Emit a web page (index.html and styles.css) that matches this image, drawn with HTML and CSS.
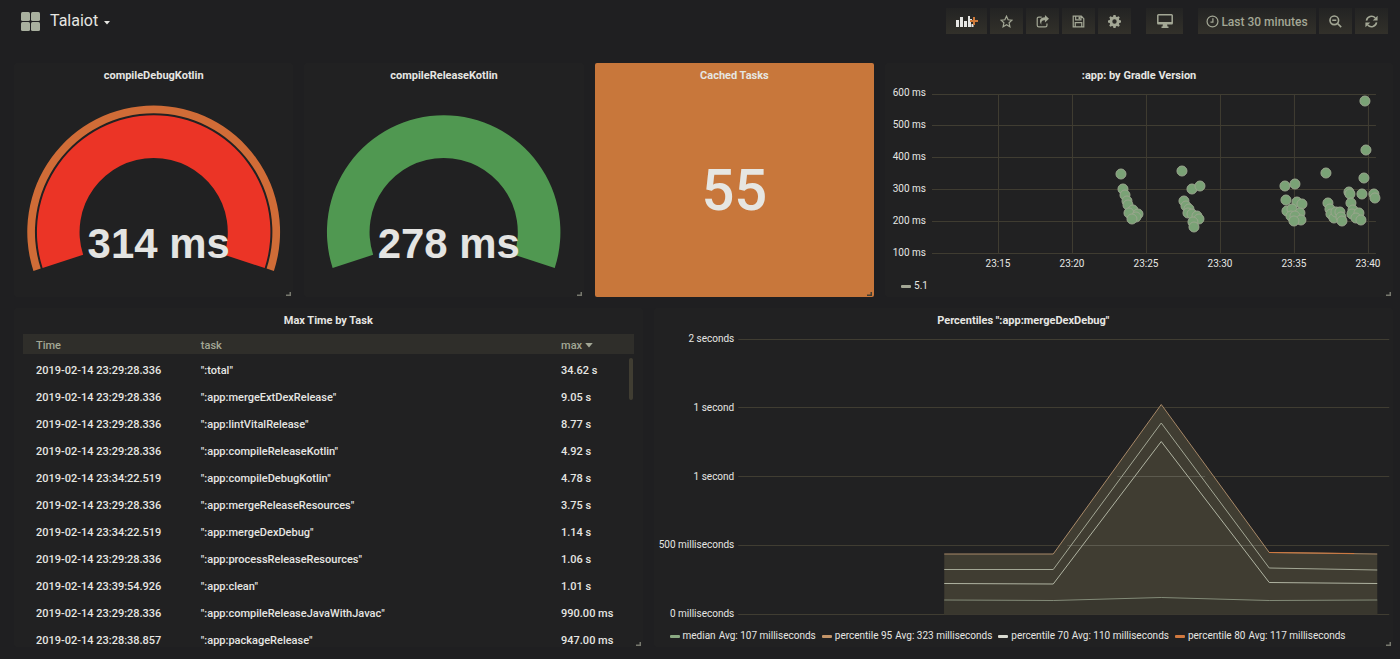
FILE: index.html
```html
<!DOCTYPE html>
<html lang="en">
<head>
<meta charset="utf-8">
<title>Talaiot</title>
<meta name="viewport" content="width=device-width, initial-scale=1">
<link rel="stylesheet" href="styles.css">
</head>
<body>
<header class="navbar">
  <button class="dash-picker" type="button">
    <svg class="dash-icon" viewBox="0 0 19 19" aria-hidden="true"><rect x="0" y="0" width="9" height="9" rx="1.5"/><rect x="10" y="0" width="9" height="9" rx="1.5"/><rect x="0" y="10" width="9" height="9" rx="1.5"/><rect x="10" y="10" width="9" height="9" rx="1.5"/></svg>
    <span class="dash-name">Talaiot</span>
    <svg class="caret" viewBox="0 0 6 4" aria-hidden="true"><path d="M0 0h6L3 3.5z"/></svg>
  </button>
  <div class="toolbar">
    <div class="tool-group">
      <button class="tool tool-add" type="button" aria-label="Add panel">
        <svg width="22" height="13" viewBox="0 0 22 13"><path fill="#e6e6e4" d="M0 5h3v7H0zM4 2h3v10H4zM8 6h3v6H8zM12 1h2v3h2v3h-1v5h-3zM15.500 9h2v3h-2z"/><path fill="#cf7a3a" d="M17 2h2v3h3v2h-3v3h-2V7h-3V5h3z"/></svg>
      </button>
      <button class="tool" type="button" aria-label="Star">
        <svg class="icon" viewBox="0 0 16 16"><path d="M8 1.500l2 4.400 4.700.5-3.500 3.200 1 4.800L8 12l-4.200 2.400 1-4.800L1.300 6.400 6 5.900z"/></svg>
      </button>
      <button class="tool" type="button" aria-label="Share">
        <svg class="icon" viewBox="0 0 16 16"><path d="M7 2.500H3.500a2 2 0 0 0-2 2v8a2 2 0 0 0 2 2h8a2 2 0 0 0 2-2v-2"/><path class="solid" d="M11 0l5 4.700-5 4.500V6.500C7.500 6.500 6 8 6.700 12 3.300 8 4.500 3 11 2.800z"/></svg>
      </button>
      <button class="tool" type="button" aria-label="Save">
        <svg class="icon" viewBox="0 0 16 16"><path d="M1.500 1.500h10l3 3v10h-13zM4 14.500V9.500h8v5M4.500 1.500v4.500h6.500V1.500"/><path class="solid" d="M8 2h2v3H8z"/></svg>
      </button>
      <button class="tool" type="button" aria-label="Settings">
        <svg class="icon" viewBox="0 0 16 16"><path class="solid" fill-rule="evenodd" d="M6.700 0h2.600l.5 2.100 1.300.5 1.900-1.100 1.500 1.500-1.100 1.900.5 1.300 2.100.5v2.600l-2.100.5-.5 1.300 1.100 1.900-1.500 1.500-1.900-1.100-1.300.5-.5 2.100H6.700l-.5-2.100-1.300-.5L3 14.500 1.500 13l1.100-1.900-.5-1.300L0 9.300V6.700l2.100-.5.5-1.300L1.500 3 3 1.500l1.900 1.100 1.300-.5zM8 5.300a2.700 2.700 0 1 0 0 5.400 2.700 2.700 0 0 0 0-5.400z"/></svg>
      </button>
    </div>
    <button class="tool tool-tv" type="button" aria-label="Cycle view mode">
      <svg width="16" height="14" viewBox="0 0 16 14"><path class="line" d="M1.500.8h13a.7.7 0 0 1 .7.700v7.500H.8V1.500a.7.7 0 0 1 .7-.7z"/><path class="solid" d="M.5 8h15v2.500H.5zM6 10h4l.5 2.500h1V14h-7v-1.500h1z"/></svg>
    </button>
    <div class="tool-group">
      <button class="tool tool-time" type="button">
        <svg class="icon" viewBox="0 0 16 16" aria-hidden="true"><circle cx="8" cy="8" r="6.700"/><path d="M8.500 4v4.700H5.500"/></svg>
        <span>Last 30 minutes</span>
      </button>
      <button class="tool" type="button" aria-label="Zoom out">
        <svg class="icon" viewBox="0 0 16 16"><g class="bold"><circle cx="6.500" cy="6.500" r="5.300"/><path d="M10.500 10.500l4.500 4.500M4 6.500h5"/></g></svg>
      </button>
      <button class="tool" type="button" aria-label="Refresh">
        <svg class="icon" viewBox="0 0 16 16"><g class="bold"><path d="M1.800 7A6.300 6.300 0 0 1 12.700 3.700M14.200 9A6.300 6.300 0 0 1 3.300 12.300"/></g><path class="solid" d="M15.500.8v6h-6zM.5 15.200v-6h6z"/></svg>
      </button>
    </div>
  </div>
</header>

<main class="dashboard">
  <div class="row row-top">
    <section class="panel">
      <h2 class="panel-title">compileDebugKotlin</h2>
      <svg class="gauge" viewBox="0 0 280 210" role="img" aria-label="314 ms">
        <path fill="#d06c37" d="M19.500 184.200A126.700 126.700 0 1 1 260.500 184.200L253.200 181.800A119 119 0 1 0 26.800 181.800z"/>
        <path fill="#eb3426" d="M28.700 181.200A117 117 0 1 1 251.300 181.200L210.700 168A74.300 74.300 0 1 0 69.300 168z"/>
        <text class="gauge-value" x="145" y="171">314 ms</text>
      </svg>
      <svg class="grip" viewBox="0 0 5 5" aria-hidden="true"><path d="M0 4h5V0H3.500v2.500H0z"/></svg>
    </section>
    <section class="panel">
      <h2 class="panel-title">compileReleaseKotlin</h2>
      <svg class="gauge" viewBox="0 0 280 210" role="img" aria-label="278 ms">
        <path fill="#509851" d="M28.700 181.200A117 117 0 1 1 251.300 181.200L210.700 168A74.300 74.300 0 1 0 69.300 168z"/>
        <text class="gauge-value" x="145" y="171">278 ms</text>
      </svg>
      <svg class="grip" viewBox="0 0 5 5" aria-hidden="true"><path d="M0 4h5V0H3.500v2.500H0z"/></svg>
    </section>
    <section class="panel panel-stat">
      <h2 class="panel-title">Cached Tasks</h2>
      <p class="stat-value">55</p>
      <svg class="grip" viewBox="0 0 5 5" aria-hidden="true"><path d="M0 4h5V0H3.500v2.500H0z"/></svg>
    </section>
    <section class="panel">
      <h2 class="panel-title">:app: by Gradle Version</h2>
      <svg class="chart chart-scatter" viewBox="-1 0 508 188">
        <path class="grid" d="M46 7.500H490M46 38.500H490M46 70.500H490M46 102.500H490M46 134.500H490M46 166.500H490M112.500 7V166M186.500 7V166M260.500 7V166M334.500 7V166M408.500 7V166M482.500 7V166"/>
        <g class="axis axis-y">
          <text x="40" y="9">600 ms</text><text x="40" y="41">500 ms</text><text x="40" y="73">400 ms</text><text x="40" y="105">300 ms</text><text x="40" y="137">200 ms</text><text x="40" y="169">100 ms</text>
        </g>
        <g class="axis axis-x">
          <text x="112" y="180">23:15</text><text x="186" y="180">23:20</text><text x="260" y="180">23:25</text><text x="334" y="180">23:30</text><text x="408" y="180">23:35</text><text x="482" y="180">23:40</text>
        </g>
        <g class="dots">
          <circle cx="235" cy="87" r="5"/><circle cx="237" cy="102" r="5"/><circle cx="239" cy="108" r="5"/><circle cx="241" cy="114" r="5"/><circle cx="242" cy="118" r="5"/><circle cx="247" cy="123" r="5"/><circle cx="243" cy="126" r="5"/><circle cx="252" cy="127" r="5"/><circle cx="250" cy="130" r="5"/><circle cx="246" cy="132" r="5"/>
          <circle cx="296" cy="84" r="5"/><circle cx="306" cy="102" r="5"/><circle cx="314" cy="99" r="5"/><circle cx="298" cy="114" r="5"/><circle cx="300" cy="119" r="5"/><circle cx="303" cy="122" r="5"/><circle cx="302" cy="126" r="5"/><circle cx="306" cy="127" r="5"/><circle cx="311" cy="129" r="5"/><circle cx="313" cy="132" r="5"/><circle cx="307" cy="135" r="5"/><circle cx="308" cy="140" r="5"/>
          <circle cx="399" cy="99" r="5"/><circle cx="409" cy="97" r="5"/><circle cx="400" cy="113" r="5"/><circle cx="411" cy="115" r="5"/><circle cx="416" cy="117" r="5"/><circle cx="401" cy="124" r="5"/><circle cx="406" cy="122" r="5"/><circle cx="405" cy="129" r="5"/><circle cx="414" cy="126" r="5"/><circle cx="409" cy="129" r="5"/><circle cx="415" cy="133" r="5"/><circle cx="408" cy="134" r="5"/>
          <circle cx="440" cy="86" r="5"/><circle cx="442" cy="116" r="5"/><circle cx="444" cy="122" r="5"/><circle cx="445" cy="127" r="5"/><circle cx="448" cy="131" r="5"/><circle cx="450" cy="125" r="5"/><circle cx="454" cy="125" r="5"/><circle cx="455" cy="130" r="5"/><circle cx="456" cy="134" r="5"/>
          <circle cx="463" cy="105" r="5"/><circle cx="464" cy="107" r="5"/><circle cx="465" cy="116" r="5"/><circle cx="467" cy="123" r="5"/><circle cx="466" cy="127" r="5"/><circle cx="473" cy="126" r="5"/><circle cx="470" cy="131" r="5"/><circle cx="475" cy="133" r="5"/><circle cx="476" cy="107" r="5"/><circle cx="488" cy="107" r="5"/><circle cx="489" cy="111" r="5"/><circle cx="478" cy="91" r="5"/><circle cx="480" cy="63" r="5"/><circle cx="479" cy="14" r="5"/>
        </g>
      </svg>
      <ul class="legend"><li><i class="swatch swatch-grey"></i>5.1</li></ul>
      <svg class="grip" viewBox="0 0 5 5" aria-hidden="true"><path d="M0 4h5V0H3.500v2.500H0z"/></svg>
    </section>
  </div>

  <div class="row row-bottom">
    <section class="panel">
      <h2 class="panel-title">Max Time by Task</h2>
      <div class="table-wrap">
        <table class="tasks">
          <thead><tr><th>Time</th><th>task</th><th>max <svg class="sort" viewBox="0 0 6 4" aria-hidden="true"><path d="M0 0h6L3 3.500z"/></svg></th></tr></thead>
          <tbody>
            <tr><td>2019-02-14 23:29:28.336</td><td>":total"</td><td>34.62 s</td></tr>
            <tr><td>2019-02-14 23:29:28.336</td><td>":app:mergeExtDexRelease"</td><td>9.05 s</td></tr>
            <tr><td>2019-02-14 23:29:28.336</td><td>":app:lintVitalRelease"</td><td>8.77 s</td></tr>
            <tr><td>2019-02-14 23:29:28.336</td><td>":app:compileReleaseKotlin"</td><td>4.92 s</td></tr>
            <tr><td>2019-02-14 23:34:22.519</td><td>":app:compileDebugKotlin"</td><td>4.78 s</td></tr>
            <tr><td>2019-02-14 23:29:28.336</td><td>":app:mergeReleaseResources"</td><td>3.75 s</td></tr>
            <tr><td>2019-02-14 23:34:22.519</td><td>":app:mergeDexDebug"</td><td>1.14 s</td></tr>
            <tr><td>2019-02-14 23:29:28.336</td><td>":app:processReleaseResources"</td><td>1.06 s</td></tr>
            <tr><td>2019-02-14 23:39:54.926</td><td>":app:clean"</td><td>1.01 s</td></tr>
            <tr><td>2019-02-14 23:29:28.336</td><td>":app:compileReleaseJavaWithJavac"</td><td>990.00 ms</td></tr>
            <tr><td>2019-02-14 23:28:38.857</td><td>":app:packageRelease"</td><td>947.00 ms</td></tr>
          </tbody>
        </table>
        <div class="scroll-thumb"></div>
      </div>
      <svg class="grip" viewBox="0 0 5 5" aria-hidden="true"><path d="M0 4h5V0H3.500v2.500H0z"/></svg>
    </section>
    <section class="panel">
      <h2 class="panel-title">Percentiles ":app:mergeDexDebug"</h2>
      <svg class="chart chart-area" viewBox="0 0 739 293">
        <path class="grid" d="M84 7.500H735M84 75.500H735M84 144.500H735M84 213.500H735M84 282.500H735"/>
        <g class="axis axis-y">
          <text x="80" y="10">2 seconds</text><text x="80" y="79">1 second</text><text x="80" y="148">1 second</text><text x="80" y="216">500 milliseconds</text><text x="80" y="285">0 milliseconds</text>
        </g>
        <path fill="#403d32" d="M290 222H399L507 73 615 220.500 723 222V282.500H290z"/>
        <path fill="#39372e" d="M290 268H399L507 266 615 269 723 268V282.500H290z"/>
        <path class="grid grid-over" d="M463 144.500H551M413 213.500H610"/>
        <path class="series" stroke="#a98a68" d="M290 222H399L507 72.500 615 220.500 723 222"/>
        <path class="series" stroke="#d0783f" d="M615 220.500L700 221.500"/>
        <path class="series" stroke="#a3a795" d="M290 237.500H399L507 91 615 236 723 238"/>
        <path class="series" stroke="#b0b4a2" d="M290 251.500L399 252 507 109.500 615 250.500 723 251.500"/>
        <path class="series" stroke="#838b78" d="M290 268L399 268.500 507 265.500 615 268.500 723 268"/>
      </svg>
      <ul class="legend">
        <li><i class="swatch swatch-green"></i>median <span>Avg: 107 milliseconds</span></li>
        <li><i class="swatch swatch-tan"></i>percentile 95 <span>Avg: 323 milliseconds</span></li>
        <li><i class="swatch swatch-light"></i>percentile 70 <span>Avg: 110 milliseconds</span></li>
        <li><i class="swatch swatch-orange"></i>percentile 80 <span>Avg: 117 milliseconds</span></li>
      </ul>
      <svg class="grip" viewBox="0 0 5 5" aria-hidden="true"><path d="M0 4h5V0H3.500v2.500H0z"/></svg>
    </section>
  </div>
</main>
</body>
</html>
```

FILE: styles.css
```css
* { box-sizing: border-box; }
body {
  margin: 0;
  background: #1f1f21;
  color: #e6e6e2;
  font-family: Roboto, "Liberation Sans", sans-serif;
  font-size: 11px;
}
button { font: inherit; color: inherit; background: none; border: 0; padding: 0; }
h2, p, ul { margin: 0; padding: 0; }
svg { display: block; }

.navbar {
  display: flex;
  justify-content: space-between;
  align-items: flex-start;
  padding: 8px 12px 0 21px;
  min-height: 51px;
}
.dash-picker { display: flex; align-items: center; height: 26px; }
.dash-icon { width: 19px; height: 19px; fill: #a9b09f; }
.dash-name { margin-left: 10px; font-size: 16px; line-height: 24px; }
.caret { width: 6px; height: 4px; margin: 4px 0 0 6px; fill: #e6e6e2; }

.toolbar { display: flex; gap: 15px; }
.tool-group { display: flex; gap: 3px; }
.tool {
  display: flex;
  align-items: center;
  justify-content: center;
  width: 33px;
  height: 26px;
  color: #a3a795;
  background: linear-gradient(#232323, #32302a);
}
.tool-add { width: 41px; }
.tool-tv { width: 37px; }
.tool-time { width: 118px; gap: 2px; font-size: 12px; font-weight: 500; line-height: 16px; }
.tool-time span { padding-top: 2px; }
.icon { width: 13px; height: 13px; fill: none; stroke: currentColor; stroke-width: 1.5; }
.bold { stroke-width: 2; }
.line { fill: none; stroke: currentColor; stroke-width: 1.5; }
.solid { fill: currentColor; stroke: none; }

.dashboard {
  display: grid;
  gap: 11px;
  padding: 12px 7px 11px 14px;
}
.row { display: grid; gap: 11px; }
.row-top { grid-template-columns: 11fr 11fr 11fr 20fr; }
.row-bottom { grid-template-columns: 17fr 20fr; }
.panel {
  position: relative;
  display: flex;
  flex-direction: column;
  min-width: 0;
  border-radius: 2px;
  background: #212122;
}
.panel-title {
  padding-top: 2px;
  font-size: 11px;
  font-weight: 700;
  line-height: 22px;
  text-align: center;
}
.grip {
  position: absolute;
  right: 2px;
  bottom: 0;
  width: 5px;
  height: 5px;
  fill: #77786e;
}
.gauge { width: 100%; height: 210px; }
.gauge-value {
  font: bold 42px "Liberation Sans", Arial, sans-serif;
  text-anchor: middle;
  fill: #e4e4e2;
}
.panel-stat { background: #c8773b; }
.panel-stat .grip { fill: #403d32; }
.stat-value {
  display: flex;
  flex: 1;
  align-items: center;
  justify-content: center;
  padding-bottom: 4px;
  font-size: 58px;
  font-weight: 500;
}

.chart { width: 100%; }
.chart-scatter { height: 188px; }
.chart-area { height: 293px; }
.grid { fill: none; stroke: #403d32; }
.grid-over { stroke: #5c5a4e; }
.axis { font-size: 10px; fill: #e6e6e2; }
.axis-y { text-anchor: end; }
.axis-x { text-anchor: middle; }
.dots { fill: #7aa276; stroke: #9aa68e; }
.series { fill: none; }

.legend {
  display: flex;
  flex-wrap: wrap;
  gap: 6px;
  padding: 0 16px;
  list-style: none;
  font-size: 10px;
  line-height: 22px;
}
.legend li { display: flex; align-items: center; gap: 3px; white-space: nowrap; }
.swatch { width: 10px; height: 3px; border-radius: 1px; }
.swatch-grey { background: #a3a795; }
.swatch-green { background: #8aa982; }
.swatch-tan { background: #c39468; }
.swatch-light { background: #d8d9d0; }
.swatch-orange { background: #d0783f; }

.table-wrap {
  position: relative;
  height: 313px;
  margin: 2px 9px 0;
  overflow: hidden;
}
.tasks {
  width: 100%;
  table-layout: fixed;
  border-collapse: collapse;
  font-weight: 500;
  white-space: nowrap;
}
.tasks th, .tasks td { padding: 0 0 0 13px; text-align: left; }
.tasks th { height: 20px; padding-top: 2px; font-weight: 500; color: #a3a795; background: #2f2e2a; }
.tasks th:nth-child(1) { width: 27%; }
.tasks th:nth-child(3) { width: 14%; }
.tasks td { height: 27px; }
.tasks tbody tr:first-child td { height: 30px; padding-top: 3px; }
.sort { display: inline-block; width: 8px; height: 5px; vertical-align: middle; fill: currentColor; }
.scroll-thumb {
  position: absolute;
  top: 24px;
  right: 1px;
  width: 4px;
  height: 42px;
  border-radius: 2px;
  background: #403d32;
}
```
